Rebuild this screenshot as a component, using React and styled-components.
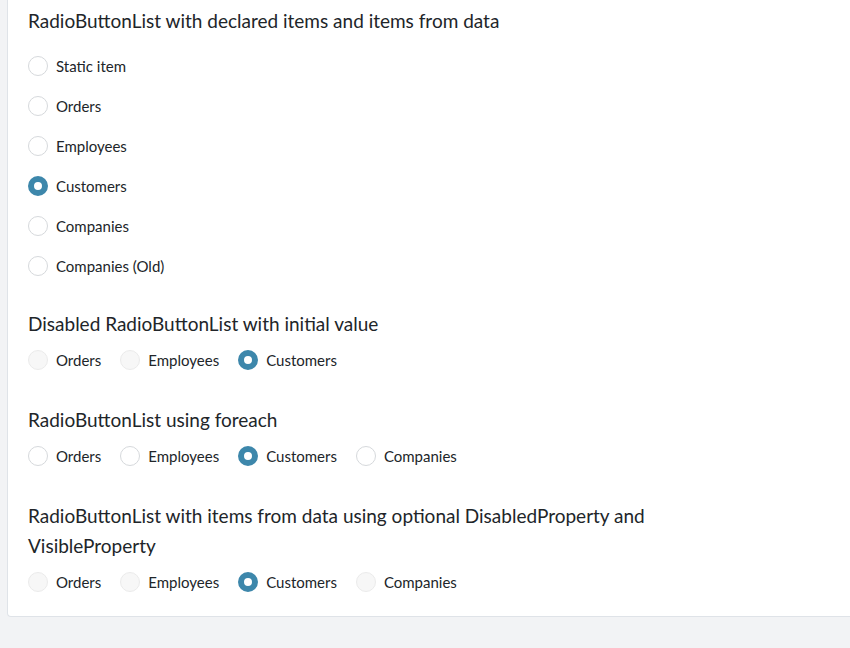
import styled, { createGlobalStyle } from "styled-components";

const GlobalStyle = createGlobalStyle`
    html, body {
        margin: 0;
        padding: 0;
        background: #f2f3f5;
        font-family: Lato, "Noto Sans", sans-serif;
        color: #212529;
    }
`;

const Page = styled.div`
    padding: 0 0 32px 7px;
    height: 648px;
    box-sizing: border-box;
    overflow: hidden;
`;

const Card = styled.div`
    background: #fff;
    border: 1px solid #dfe3e8;
    border-top: none;
    border-right: none;
    border-radius: 0 0 0 4px;
    padding: 6px 0 19px 20px;
`;

const Section = styled.section`
    margin-bottom: ${(p) => p.$gap || "0"};
`;

const Title = styled.h3`
    margin: 0 0 ${(p) => (p.$spaced ? "10px" : "6px")};
    font-size: 19px;
    font-weight: 400;
    line-height: 30px;
    width: 650px;
`;

const List = styled.div`
    display: flex;
    flex-direction: ${(p) => (p.$vertical ? "column" : "row")};
    gap: ${(p) => (p.$vertical ? "0" : "19px")};
`;

const Item = styled.label`
    display: flex;
    align-items: center;
    gap: 8px;
    height: ${(p) => (p.$vertical ? "40px" : "30px")};
    font-size: 15px;
`;

const Circle = styled.span`
    width: 20px;
    height: 20px;
    box-sizing: border-box;
    border-radius: 50%;
    flex: none;
    border: ${(p) => (p.$checked ? "6px solid #3d87ab" : `1px solid ${p.$disabled ? "#ebebeb" : "#d6d9dc"}`)};
    background: ${(p) => (p.$checked ? "#fff" : p.$disabled ? "#f7f7f7" : "#fff")};
`;

const Radio = ({ label, checked, disabled, vertical }) => (
    <Item $vertical={vertical}>
        <Circle $checked={checked} $disabled={disabled} />
        {label}
    </Item>
);

const four = ["Orders", "Employees", "Customers", "Companies"];

export default function App() {
    return (
        <Page>
            <GlobalStyle />
            <Card>
                <Section $gap="23px">
                    <Title $spaced>RadioButtonList with declared items and items from data</Title>
                    <List $vertical>
                        {["Static item", "Orders", "Employees", "Customers", "Companies", "Companies (Old)"].map((l) => (
                            <Radio key={l} label={l} vertical checked={l === "Customers"} />
                        ))}
                    </List>
                </Section>
                <Section $gap="30px">
                    <Title>Disabled RadioButtonList with initial value</Title>
                    <List>
                        {["Orders", "Employees", "Customers"].map((l) => (
                            <Radio key={l} label={l} disabled checked={l === "Customers"} />
                        ))}
                    </List>
                </Section>
                <Section $gap="30px">
                    <Title>RadioButtonList using foreach</Title>
                    <List>
                        {four.map((l) => (
                            <Radio key={l} label={l} checked={l === "Customers"} />
                        ))}
                    </List>
                </Section>
                <Section>
                    <Title>RadioButtonList with items from data using optional DisabledProperty and VisibleProperty</Title>
                    <List>
                        {four.map((l) => (
                            <Radio key={l} label={l} disabled={l !== "Customers"} checked={l === "Customers"} />
                        ))}
                    </List>
                </Section>
            </Card>
        </Page>
    );
}
